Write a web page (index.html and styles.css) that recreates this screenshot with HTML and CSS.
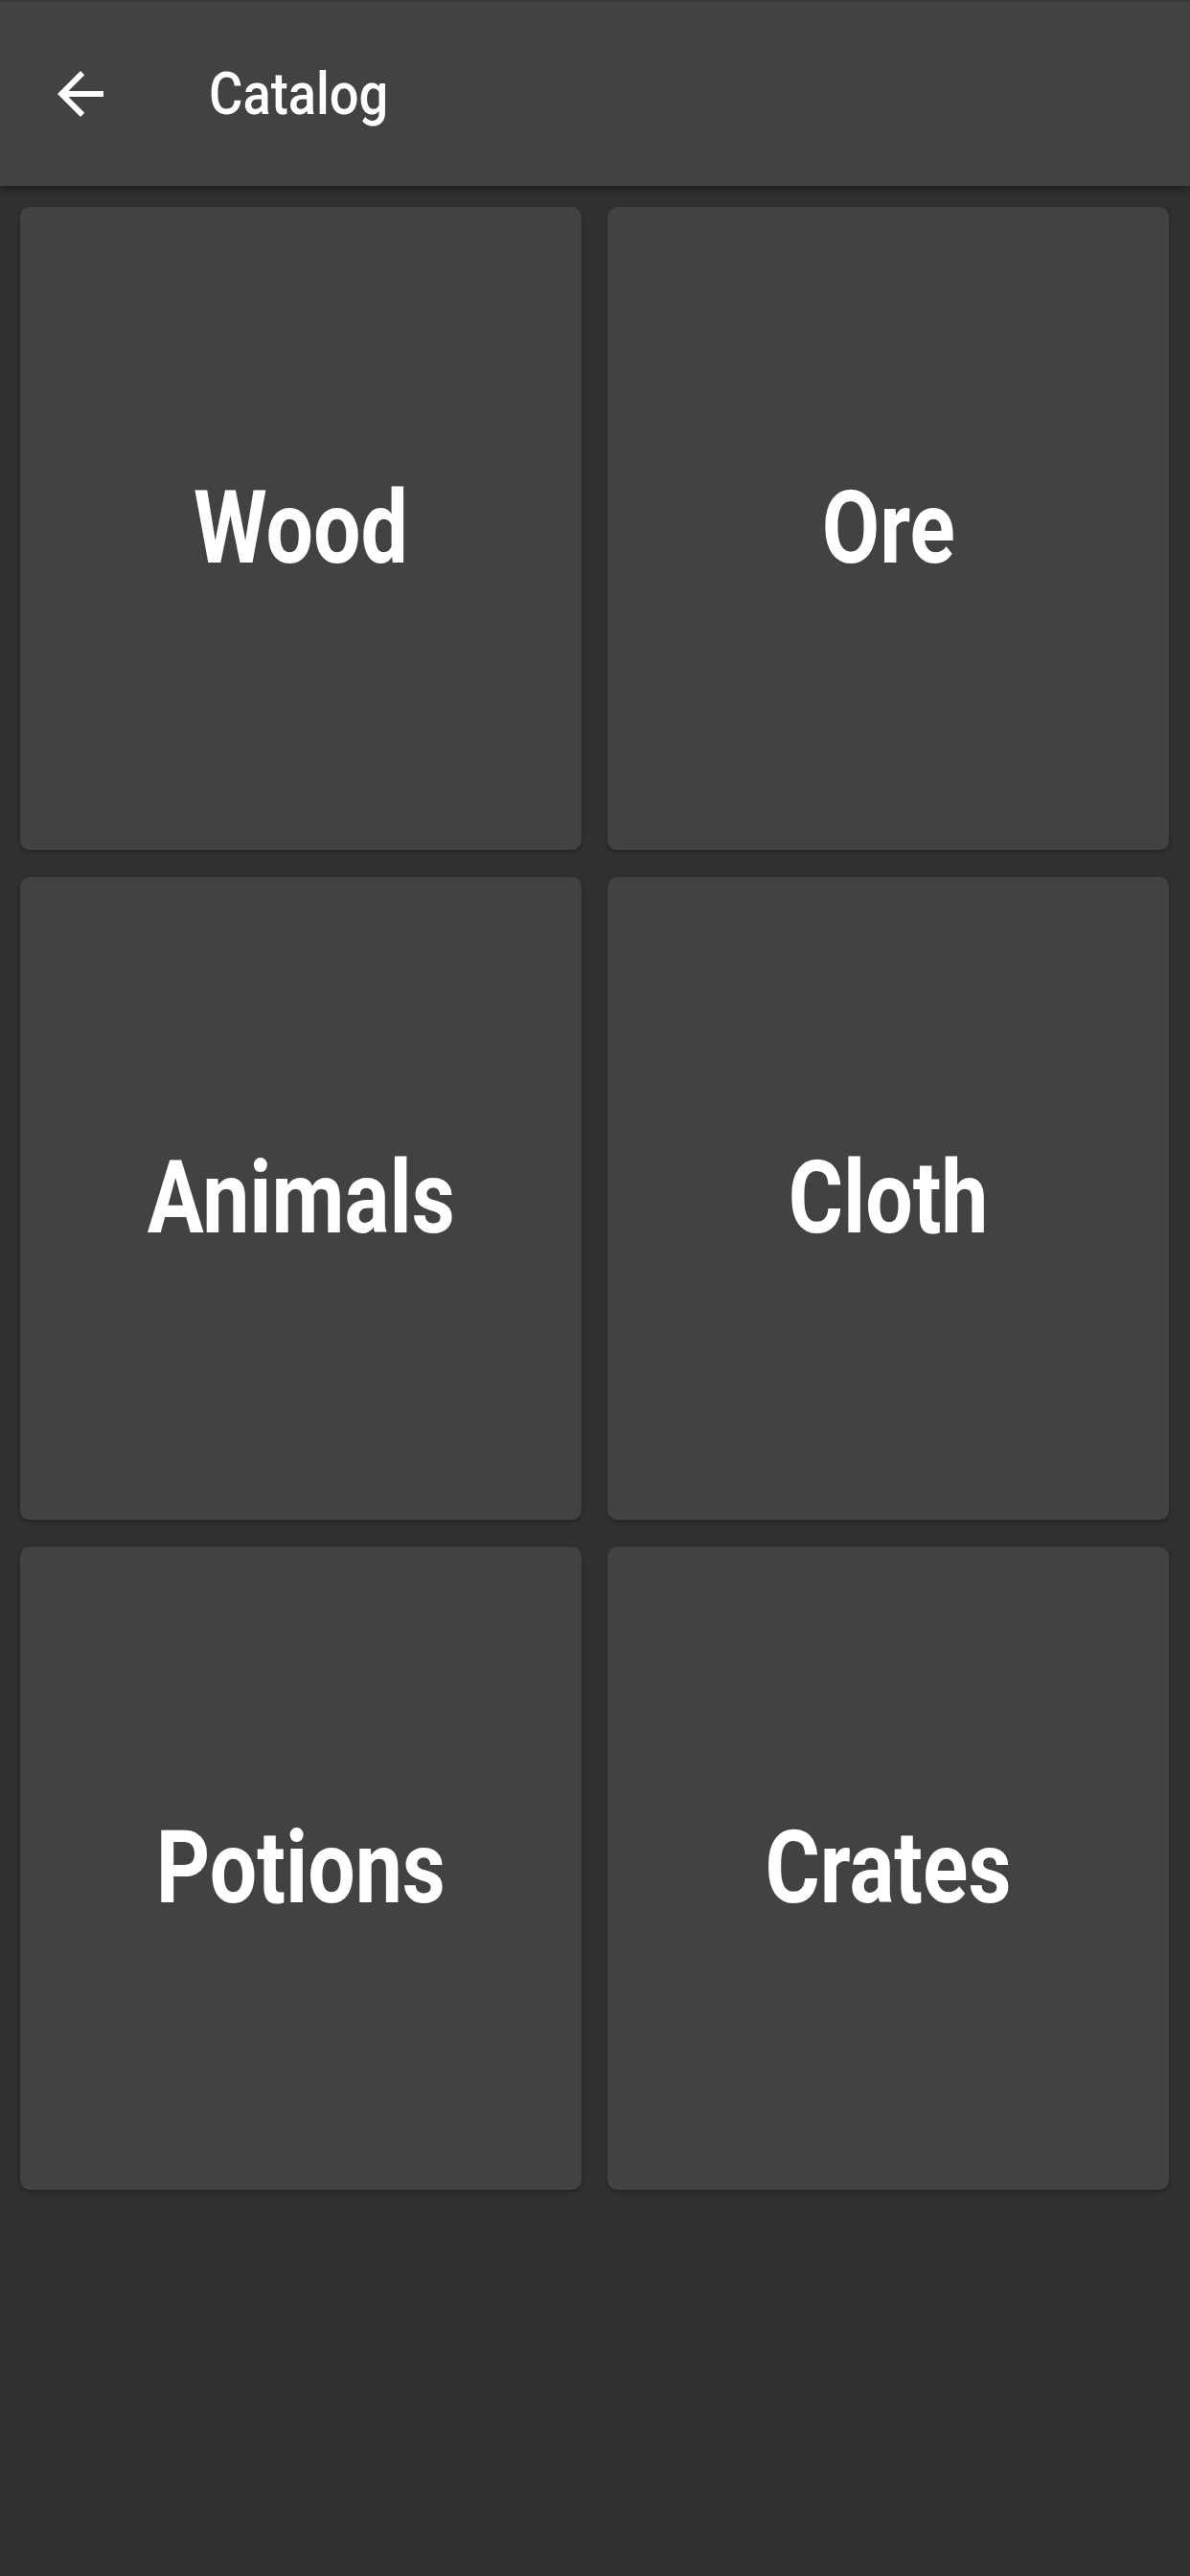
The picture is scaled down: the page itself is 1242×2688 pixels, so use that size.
FILE: index.html
```html
<!DOCTYPE html>
<html lang="en">
<head>
<meta charset="utf-8">
<title>Catalog</title>
<link rel="stylesheet" href="styles.css">
</head>
<body>
<header class="toolbar">
  <button class="back" aria-label="Back">
    <svg viewBox="0 0 24 24" width="72" height="72"><path fill="#ffffff" d="M20 11H7.83l5.59-5.59L12 4l-8 8 8 8 1.41-1.41L7.83 13H20v-2z"/></svg>
  </button>
  <h1 class="title"><span>Catalog</span></h1>
</header>
<main class="grid">
  <div class="card"><span class="label">Wood</span></div>
  <div class="card"><span class="label">Ore</span></div>
  <div class="card"><span class="label">Animals</span></div>
  <div class="card"><span class="label">Cloth</span></div>
  <div class="card"><span class="label">Potions</span></div>
  <div class="card"><span class="label">Crates</span></div>
</main>
</body>
</html>
```
FILE: styles.css
```css
html, body {
  margin: 0;
  padding: 0;
  background: #303030;
  font-family: Roboto, "Noto Sans", sans-serif;
  color: #ffffff;
}
body {
  width: 1242px;
  height: 2688px;
  overflow: hidden;
}
.toolbar {
  position: relative;
  z-index: 1;
  height: 194px;
  box-sizing: border-box;
  border-top: 2px solid #383838;
  background: #424242;
  display: flex;
  align-items: center;
  box-shadow: 0 3px 10px rgba(0, 0, 0, 0.45);
}
.back {
  margin-left: 48px;
  width: 72px;
  height: 72px;
  padding: 0;
  border: 0;
  background: none;
  display: flex;
}
.title {
  margin: 0 0 0 98px;
  font-size: 62px;
  font-weight: 500;
  line-height: 1;
}
.title span {
  display: inline-block;
  transform: scaleX(0.875);
  transform-origin: left center;
}
.grid {
  display: grid;
  grid-template-columns: 586px 586px;
  grid-auto-rows: 671px;
  column-gap: 27px;
  row-gap: 28px;
  padding: 22px 21px;
}
.card {
  background: #424242;
  border-radius: 10px;
  box-shadow: 0 2px 4px rgba(0, 0, 0, 0.3);
  display: flex;
  align-items: center;
  justify-content: center;
}
.label {
  display: inline-block;
  font-size: 105px;
  font-weight: 700;
  line-height: 1;
  transform: scaleX(0.835);
}
```
